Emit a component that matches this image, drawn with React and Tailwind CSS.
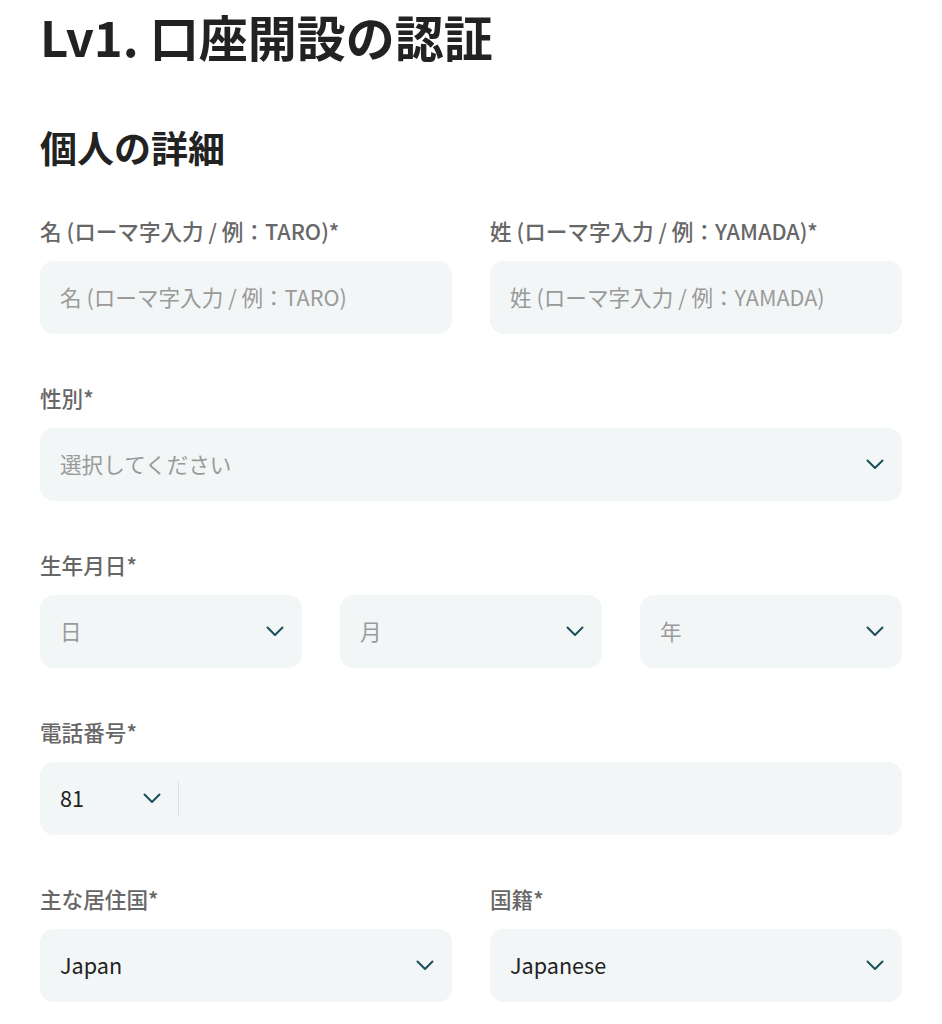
import React from "react";

const font = { fontFamily: '"Noto Sans CJK JP", "Noto Sans", sans-serif' };

function Chevron() {
  return (
    <svg width="18" height="11" viewBox="0 0 18 11" fill="none" className="shrink-0">
      <path d="M1.5 1.5 L9 9 L16.5 1.5" stroke="#1b505b" strokeWidth="2" strokeLinecap="round" strokeLinejoin="round" />
    </svg>
  );
}

function Label({ children }) {
  return <div className="h-[28px] leading-[28px] text-[21.6px] font-medium text-[#676767] mb-4 whitespace-nowrap">{children}</div>;
}

function Box({ children, className = "" }) {
  return (
    <div className={"h-[73px] rounded-[14px] bg-[#f3f6f6] flex items-center pl-5 pr-[18px] " + className}>
      {children}
    </div>
  );
}

function TextField({ label, placeholder }) {
  return (
    <div className="flex-1 min-w-0">
      <Label>{label}</Label>
      <Box>
        <span className="text-[21.6px] text-[#9a9a9a] whitespace-nowrap">{placeholder}</span>
      </Box>
    </div>
  );
}

function SelectBox({ value, placeholder }) {
  return (
    <Box className="justify-between">
      {value ? (
        <span className="text-[21.6px] text-[#222222]">{value}</span>
      ) : (
        <span className="text-[21.6px] text-[#9a9a9a]">{placeholder}</span>
      )}
      <Chevron />
    </Box>
  );
}

export default function App() {
  return (
    <div className="bg-white w-[942px] min-h-[1024px] px-10 pt-[6px]" style={font}>
      <h1 className="text-[49px] leading-[60px] font-bold text-[#222222] whitespace-nowrap">Lv1. 口座開設の認証</h1>
      <h2 className="mt-[58px] text-[37px] leading-[47px] font-bold text-[#222222]">個人の詳細</h2>

      <div className="mt-[46px] flex flex-col gap-[50px]">
        <div className="flex gap-[38px]">
          <TextField label="名 (ローマ字入力 / 例：TARO)*" placeholder="名 (ローマ字入力 / 例：TARO)" />
          <TextField label="姓 (ローマ字入力 / 例：YAMADA)*" placeholder="姓 (ローマ字入力 / 例：YAMADA)" />
        </div>

        <div>
          <Label>性別*</Label>
          <SelectBox placeholder="選択してください" />
        </div>

        <div>
          <Label>生年月日*</Label>
          <div className="grid grid-cols-3 gap-[38px]">
            <SelectBox placeholder="日" />
            <SelectBox placeholder="月" />
            <SelectBox placeholder="年" />
          </div>
        </div>

        <div>
          <Label>電話番号*</Label>
          <Box>
            <span className="text-[21.6px] text-[#222222] w-[83px]">81</span>
            <Chevron />
            <div className="ml-[17px] w-px h-[34px] bg-[#dcdfdf]" />
          </Box>
        </div>

        <div className="flex gap-[38px]">
          <div className="flex-1 min-w-0">
            <Label>主な居住国*</Label>
            <SelectBox value="Japan" />
          </div>
          <div className="flex-1 min-w-0">
            <Label>国籍*</Label>
            <SelectBox value="Japanese" />
          </div>
        </div>
      </div>
    </div>
  );
}
